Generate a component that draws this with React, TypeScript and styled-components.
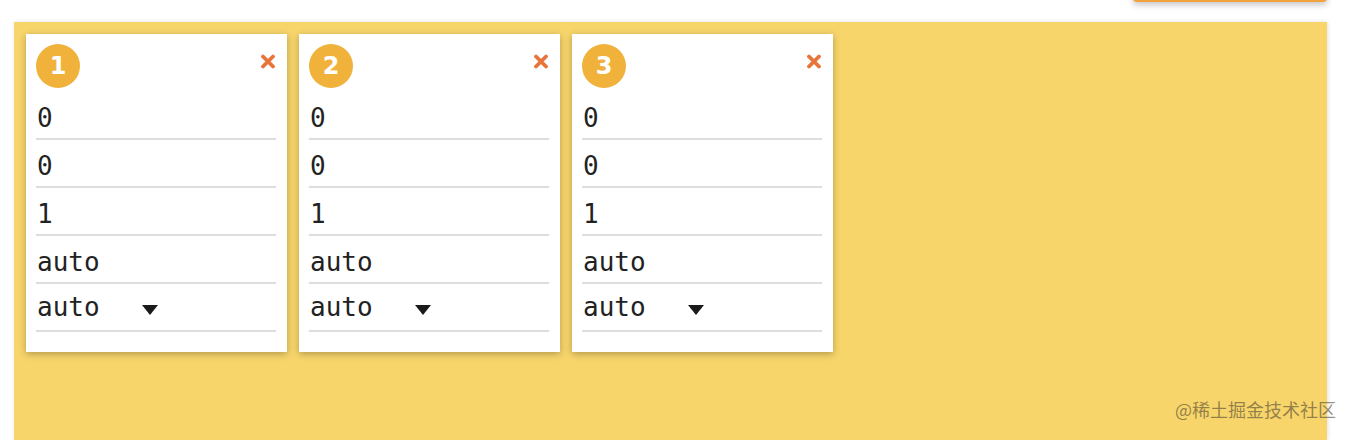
import type { FC } from "react";
import styled, { createGlobalStyle } from "styled-components";

const GlobalStyle = createGlobalStyle`
  html, body {
    margin: 0;
    padding: 0;
    background: #ffffff;
    overflow: hidden;
  }
  body {
    font-family: "DejaVu Sans Mono", monospace;
  }
`;

const Page = styled.div`
  width: 1352px;
  height: 440px;
  position: relative;
  box-sizing: border-box;
  padding: 0 25px 0 14px;
  display: flex;
  flex-direction: column;
`;

const Toolbar = styled.div`
  height: 22px;
  display: flex;
  justify-content: flex-end;
  align-items: flex-start;
`;

// button of the page above, scrolled mostly out of view
const TopButton = styled.div`
  width: 194px;
  height: 40px;
  margin-top: -38px;
  border-radius: 4px;
  background: #f2a23c;
  box-shadow: 0 3px 6px rgba(0, 0, 0, 0.22);
`;

const Board = styled.div`
  flex: 1;
  background: #f7d56b;
  box-shadow: 1px 0 4px rgba(0, 0, 0, 0.12);
  padding: 12px;
  display: flex;
  align-items: flex-start;
  gap: 12px;
`;

const Card = styled.div`
  width: 261px;
  box-sizing: border-box;
  background: #ffffff;
  padding: 10px 11px 20px 10px;
  box-shadow: 0 2px 7px rgba(0, 0, 0, 0.28);
`;

const CardHeader = styled.div`
  display: flex;
  justify-content: space-between;
  align-items: flex-start;
  margin-bottom: 4px;
`;

const Badge = styled.div`
  width: 44px;
  height: 44px;
  border-radius: 50%;
  background: #f0b23b;
  color: #ffffff;
  font-family: "DejaVu Sans", "Open Sans", sans-serif;
  font-weight: 700;
  font-size: 24px;
  display: flex;
  align-items: center;
  justify-content: center;
`;

const Close = styled.button`
  border: 0;
  background: none;
  padding: 0;
  margin: 9px 0 0 0;
  width: 16px;
  height: 16px;
  display: flex;
  align-items: center;
  justify-content: center;
  cursor: pointer;
`;

const Field = styled.div<{ $select?: boolean }>`
  box-sizing: content-box;
  border-bottom: 2px solid #dddddd;
  display: flex;
  align-items: center;
  padding: ${(p) => (p.$select ? "2px 0 2px 1px" : "5px 0 0 1px")};
  height: ${(p) => (p.$select ? "42px" : "41px")};
  font-size: 26px;
  color: #222222;
  font-family: "DejaVu Sans Mono", monospace;
  font-variant-numeric: slashed-zero;
`;

const Value = styled.span`
  width: 105px;
`;

const Caret = styled.span`
  width: 0;
  height: 0;
  margin-top: 6px;
  border-left: 8px solid transparent;
  border-right: 8px solid transparent;
  border-top: 10px solid #1a1a1a;
`;

const Watermark = styled.div`
  position: absolute;
  right: 16px;
  bottom: 18px;
  font-family: "Noto Sans CJK SC", sans-serif;
  font-size: 18px;
  color: rgba(80, 70, 50, 0.6);
`;

const CrossIcon: FC = () => (
  <svg width="16" height="15" viewBox="0 0 16 15">
    <path
      d="M3 2.5 L13 12.5 M13 2.5 L3 12.5"
      stroke="#e8743a"
      strokeWidth="3.8"
      strokeLinecap="round"
    />
  </svg>
);

const cards = [1, 2, 3];
const values = ["0", "0", "1", "auto"];

const FlexCard: FC<{ index: number }> = ({ index }) => (
  <Card>
    <CardHeader>
      <Badge>{index}</Badge>
      <Close aria-label="remove">
        <CrossIcon />
      </Close>
    </CardHeader>
    {values.map((v, i) => (
      <Field key={`field-${i}`}>{v}</Field>
    ))}
    <Field $select>
      <Value>auto</Value>
      <Caret />
    </Field>
  </Card>
);

const App: FC = () => {
  return (
    <>
      <GlobalStyle />
      <Page>
        <Toolbar>
          <TopButton />
        </Toolbar>
        <Board>
          {cards.map((n) => (
            <FlexCard key={n} index={n} />
          ))}
        </Board>
        <Watermark>@稀土掘金技术社区</Watermark>
      </Page>
    </>
  );
};

export default App;
